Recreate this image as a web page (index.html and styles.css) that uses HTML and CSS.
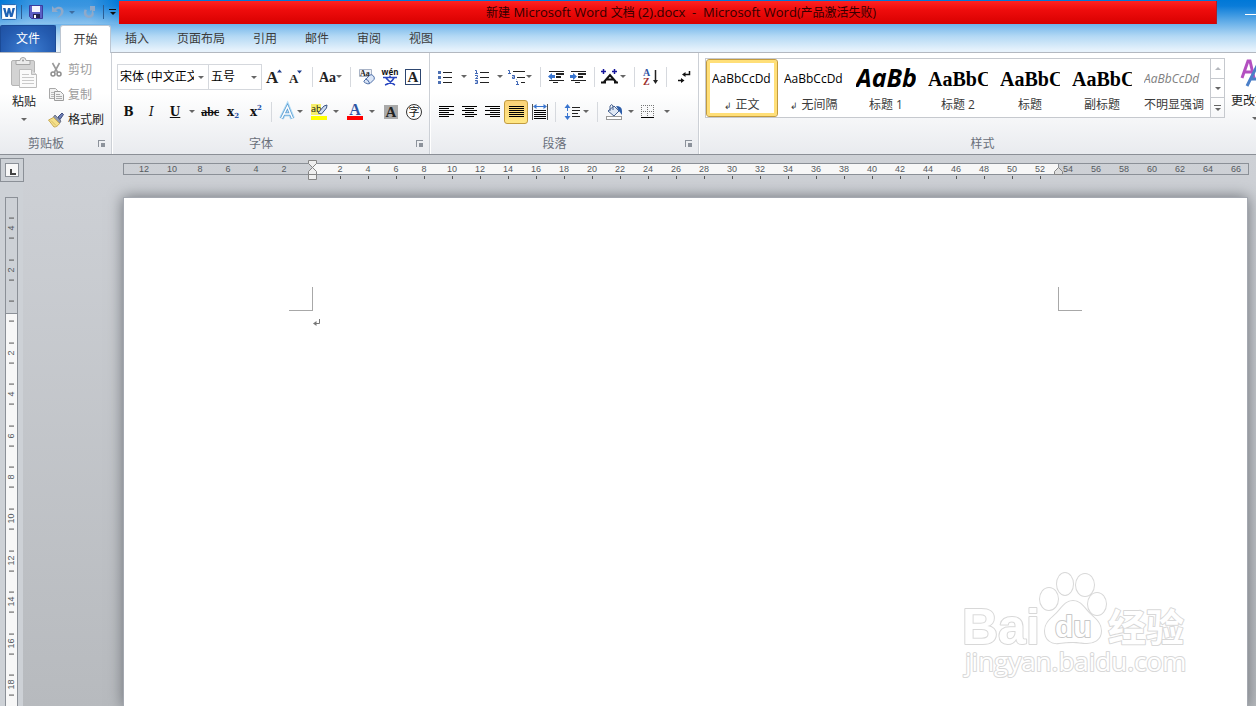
FILE: index.html
```html
<!DOCTYPE html>
<html lang="zh-CN">
<head>
    <meta charset="UTF-8">
    <meta name="viewport" content="width=device-width, initial-scale=1.0">
    <title>新建 Microsoft Word 文档 (2).docx - Microsoft Word</title>
    <link rel="stylesheet" href="styles.css">
</head>
<body>

<header class="window-top">
    <div class="title-bar">
        <div class="quick-access">
            <svg class="word-logo" width="16" height="16" viewBox="0 0 16 16">
                <rect x="0.5" y="0.5" width="15" height="15" rx="1" fill="#e9f2fb" stroke="#2a6cb5"/>
                <rect x="2" y="2" width="12" height="12" fill="#fff"/>
                <path d="M2 4h2.500l1.200 5.500L7 4h2l1.300 5.500L11.500 4H14l-2.500 9H9L8 8.500 7 13H4.500z" fill="#1e62b4"/>
            </svg>
            <span class="qa-line"></span>
            <button class="qa-btn" aria-label="保存">
                <svg width="14" height="14" viewBox="0 0 14 14">
                    <path d="M0.500 0.500h13v13h-11l-2-2z" fill="#5b5fc4" stroke="#3a3c9c"/>
                    <rect x="3" y="1" width="8" height="6" fill="#f3f5fd"/>
                    <rect x="4" y="9" width="7" height="4" fill="#23244f"/>
                    <rect x="5" y="10" width="2" height="3" fill="#fff"/>
                </svg>
            </button>
            <button class="qa-btn qa-undo" aria-label="撤消">
                <svg width="13" height="14" viewBox="0 0 13 14">
                    <path d="M1 1v6h6L5 5c3-2 5-1 5 1.500S8 11 6 13c4-1 7-4 6.500-7.500C12 1.500 7 0.500 3.500 3.500z" fill="#8fa9c9"/>
                </svg>
            </button>
            <span class="arrow arrow-blue"></span>
            <button class="qa-btn qa-redo" aria-label="重复">
                <svg width="13" height="14" viewBox="0 0 13 14">
                    <path d="M7 1h5v5h-2c2 4 0 7-4 7S-0.500 9 1.500 4.500L4 5C2.500 8 4 10.500 6 10.500S9.500 8 8.500 5L7 6z" fill="#8fa9c9"/>
                </svg>
            </button>
            <span class="qa-line"></span>
            <button class="qa-more" aria-label="自定义快速访问工具栏"><span class="arrow"></span></button>
        </div>
        <div class="title-text"><span>新建</span> Microsoft Word <span>文档</span> (2).docx&nbsp; -&nbsp; Microsoft Word<span>(产品激活失败)</span></div>
        <button class="minimize" aria-label="最小化"></button>
    </div>
    <nav class="tabs">
        <button class="tab tab-file">文件</button>
        <button class="tab tab-active">开始</button>
        <button class="tab">插入</button>
        <button class="tab">页面布局</button>
        <button class="tab">引用</button>
        <button class="tab">邮件</button>
        <button class="tab">审阅</button>
        <button class="tab">视图</button>
    </nav>
</header>

<section class="ribbon">

    <!-- clipboard -->
    <div class="group group-clipboard">
        <div class="group-body clipboard">
            <button class="big-btn">
                <svg width="28" height="32" viewBox="0 0 28 32">
                    <rect x="1.500" y="3.500" width="23" height="25" rx="1.500" fill="#d3d3d3" stroke="#b5b5b5"/>
                    <path d="M6 3.500h4a3 3 0 0 1 6 0h4v4H6z" fill="#ececec" stroke="#a5a5a5"/>
                    <circle cx="13" cy="3.500" r="1" fill="#999"/>
                    <path d="M9.500 12.500h12l5 5v13h-17z" fill="#fafafa" stroke="#bcbcbc"/>
                    <path d="M21.500 12.500v5h5" fill="#ddd" stroke="#bcbcbc"/>
                    <path d="M12 17.500h7M12 20.500h12M12 23.500h12M12 26.500h12" stroke="#c9c9c9"/>
                </svg>
                <span>粘贴</span>
                <span class="arrow"></span>
            </button>
            <div class="clip-list">
                <button class="clip-btn" disabled>
                    <svg width="16" height="16" viewBox="0 0 16 16">
                        <path d="M4.500 1l5 9M11.500 1l-5 9" stroke="#9a9a9a" stroke-width="1.600" fill="none"/>
                        <circle cx="5" cy="12" r="2" fill="none" stroke="#8d8d8d" stroke-width="1.500"/>
                        <circle cx="11" cy="12" r="2" fill="none" stroke="#8d8d8d" stroke-width="1.500"/>
                    </svg>剪切
                </button>
                <button class="clip-btn" disabled>
                    <svg width="16" height="16" viewBox="0 0 16 16">
                        <path d="M1.500 1.500h6l2 2v8h-8z" fill="#f2f2f2" stroke="#a8a8a8"/>
                        <path d="M3 5.500h4M3 7.500h3M3 9.500h3" stroke="#b9b9b9"/>
                        <path d="M6.500 4.500h6l3 3v6h-9z" fill="#f2f2f2" stroke="#9c9c9c"/>
                        <path d="M8 7.500h4M8 9.500h6M8 11.500h6" stroke="#aaa"/>
                    </svg>复制
                </button>
                <button class="clip-btn">
                    <svg width="16" height="16" viewBox="0 0 16 16">
                        <path d="M10 5l4-4 1.500 1.500-3.500 5z" fill="#6d7fb5" stroke="#3e4d80"/>
                        <path d="M7 3l6 6-1.500 2.500L5 5.500z" fill="#8f98ab" stroke="#4d566e" stroke-width="0.700"/>
                        <path d="M5.500 5.500l6 6C10 14 8 15 6 15L0.500 8z" fill="#f5e08a" stroke="#c9ab55"/>
                        <path d="M3 8.500l5 5" stroke="#d8bd62"/>
                    </svg>格式刷
                </button>
            </div>
        </div>
        <div class="group-label">剪贴板<i class="launcher"></i></div>
    </div>

    <!-- font -->
    <div class="group group-font">
        <div class="group-body">
            <div class="row">
                <label class="combo combo-font"><select aria-label="字体"><option>宋体 (中文正文)</option></select></label>
                <label class="combo combo-size"><select aria-label="字号"><option>五号</option></select></label>
                <button class="btn" aria-label="增大字体">
                    <svg width="16" height="16" viewBox="0 0 16 16">
                        <text class="serif" x="0" y="14" font-size="17">A</text>
                        <path d="M11 3.500h5L13.500 0.500z" fill="#1f3f8f"/>
                    </svg>
                </button>
                <button class="btn" aria-label="缩小字体">
                    <svg width="16" height="16" viewBox="0 0 16 16">
                        <text class="serif" x="0" y="14" font-size="13">A</text>
                        <path d="M8 1.500h5l-2.500 3z" fill="#1f3f8f"/>
                    </svg>
                </button>
                <span class="sep"></span>
                <button class="btn btn-menu" aria-label="更改大小写">
                    <svg width="18" height="16" viewBox="0 0 18 16">
                        <text class="serif" x="1" y="13" font-size="14">Aa</text>
                    </svg>
                    <span class="arrow"></span>
                </button>
                <span class="sep"></span>
                <button class="btn" aria-label="清除格式">
                    <svg width="18" height="18" viewBox="0 0 18 18">
                        <path d="M1.500 1.500h12v7h-12z" fill="#eef1f7" stroke="#a9b4c7"/>
                        <text x="2" y="8" font-size="8" class="serif">Aa</text>
                        <path d="M6 13l6-6q2-1 3.500 1t0.500 3.500l-4 4q-2 1-4.500-0.500T6 13z" fill="#dbe6f7" stroke="#4e6fa8"/>
                        <path d="M7 11q3 0 4.500 4" fill="none" stroke="#4e6fa8"/>
                    </svg>
                </button>
                <button class="btn" aria-label="拼音指南">
                    <svg width="18" height="18" viewBox="0 0 18 18">
                        <text x="9" y="7" font-size="8" text-anchor="middle" class="pinyin">wén</text>
                        <path d="M2 9.500h14M9 7.500v2M5 10q3 4 9 7M13 10q-3 5-9 7" fill="none" stroke="#2846c0" stroke-width="1.500"/>
                    </svg>
                </button>
                <button class="btn" aria-label="字符边框">
                    <svg width="16" height="16" viewBox="0 0 16 16">
                        <rect x="0.500" y="0.500" width="15" height="15" fill="#fff" stroke="#2d4670"/>
                        <text class="serif" x="8" y="13" font-size="15" text-anchor="middle">A</text>
                    </svg>
                </button>
            </div>
            <div class="row">
                <button class="btn letter">B</button>
                <button class="btn letter letter-i">I</button>
                <button class="btn btn-split letter" aria-label="下划线"><span class="letter-u">U</span><span class="arrow"></span></button>
                <button class="btn letter letter-s">abc</button>
                <button class="btn letter">x<span class="low">2</span></button>
                <button class="btn letter">x<span class="high">2</span></button>
                <span class="sep"></span>
                <button class="btn btn-menu" aria-label="文本效果">
                    <svg width="20" height="18" viewBox="0 0 20 18">
                        <path d="M4.500 15.500L10.500 3.500l5 12M7 11h7" fill="none" stroke="#b3ddf6" stroke-width="5"/>
                        <path d="M4.500 15.500L10.500 3.500l5 12M7 11h7" fill="none" stroke="#5b9bd0" stroke-width="3"/>
                        <path d="M4.500 15.500L10.500 3.500l5 12M7 11h7" fill="none" stroke="#fff" stroke-width="1.500"/>
                    </svg>
                    <span class="arrow"></span>
                </button>
                <button class="btn btn-split" aria-label="突出显示">
                    <svg width="18" height="18" viewBox="0 0 18 18">
                        <rect x="1" y="1" width="10" height="11" fill="#f5ee6c"/>
                        <text x="1" y="9" font-size="9" class="sans">ab</text>
                        <path d="M8 10l6-7 3-1-0.500 3-5 6z" fill="#cfdcf1" stroke="#3d5787"/>
                        <rect x="1" y="13" width="16" height="4" fill="#ff0"/>
                    </svg>
                    <span class="arrow"></span>
                </button>
                <button class="btn btn-split" aria-label="字体颜色">
                    <svg width="18" height="18" viewBox="0 0 18 18">
                        <text class="serif blue" x="9" y="12" font-size="16" text-anchor="middle">A</text>
                        <rect x="1" y="13" width="16" height="4" fill="#f00"/>
                    </svg>
                    <span class="arrow"></span>
                </button>
                <button class="btn" aria-label="字符底纹">
                    <svg width="14" height="14" viewBox="0 0 14 14">
                        <rect width="14" height="14" fill="#aaa"/>
                        <text class="serif" x="7" y="12" font-size="15" text-anchor="middle">A</text>
                    </svg>
                </button>
                <button class="btn" aria-label="带圈字符">
                    <svg width="18" height="18" viewBox="0 0 18 18">
                        <circle cx="9" cy="9" r="7.500" fill="#fff" stroke="#333"/>
                        <text class="sans" x="9" y="13" font-size="11" text-anchor="middle">字</text>
                    </svg>
                </button>
            </div>
        </div>
        <div class="group-label">字体<i class="launcher"></i></div>
    </div>

    <!-- paragraph -->
    <div class="group group-paragraph">
        <div class="group-body">
            <div class="row">
                <button class="btn btn-split" aria-label="项目符号">
                    <svg width="15" height="16" viewBox="0 0 15 16">
                        <path d="M5 3.500h9M5 8.500h9M5 13.500h9" stroke="#222"/>
                        <path d="M0 2h3v3H0zM0 7h3v3H0zM0 12h3v3H0z" fill="#4d70b3"/>
                    </svg>
                    <span class="arrow"></span>
                </button>
                <button class="btn btn-split" aria-label="编号">
                    <svg width="15" height="16" viewBox="0 0 15 16">
                        <path d="M6 3.500h9M6 8.500h9M6 13.500h9" stroke="#222"/>
                        <path d="M1 1.500h1.500v3M1 4.500h3M1 6.500h2.500v1.500L1.500 9.500H4M1 11.500h2.500v3H1M1.500 13H3" fill="none" stroke="#3f66b5"/>
                    </svg>
                    <span class="arrow"></span>
                </button>
                <button class="btn btn-menu" aria-label="多级列表">
                    <svg width="18" height="16" viewBox="0 0 18 16">
                        <path d="M5 2.500h12M9 8.500h8M13 13.500h4" stroke="#222"/>
                        <path d="M0 1.500h1.500v3M0 4.500h3M4 6.500h2.500v3H4.500V8H6M8.500 10v0.500M8 12.500h1.500v3M8 15.500h3" fill="none" stroke="#3f66b5"/>
                    </svg>
                    <span class="arrow"></span>
                </button>
                <span class="sep"></span>
                <button class="btn" aria-label="减少缩进量">
                    <svg width="17" height="16" viewBox="0 0 17 16">
                        <path d="M1 2.500h15M8 5.500h8M8 8.500h5M1 11.500h15M5 13.500h5" stroke="#222"/>
                        <path d="M8 4.500h8M8 7.500h5" stroke="#222"/>
                        <path d="M0 7.500l4-3.500v2h3v3H4v2z" fill="#3874cf"/>
                    </svg>
                </button>
                <button class="btn" aria-label="增加缩进量">
                    <svg width="17" height="16" viewBox="0 0 17 16">
                        <path d="M1 2.500h15M8 5.500h8M8 8.500h5M1 11.500h15M5 13.500h5" stroke="#222"/>
                        <path d="M8 4.500h8M8 7.500h5" stroke="#222"/>
                        <path d="M7 7.500L3 4v2H0v3h3v2z" fill="#3874cf"/>
                    </svg>
                </button>
                <span class="sep"></span>
                <button class="btn btn-menu" aria-label="中文版式">
                    <svg width="20" height="16" viewBox="0 0 20 16">
                        <path d="M4 13l6-7 6 7M7 10.500h6M1 13.500h5M14 13.500h4" fill="none" stroke="#111" stroke-width="2"/>
                        <path d="M1 2.500h5M3.500 0v5M12 2.500h5M14.500 0v5" stroke="#15159a" stroke-width="1.500"/>
                    </svg>
                    <span class="arrow"></span>
                </button>
                <span class="sep"></span>
                <button class="btn" aria-label="排序">
                    <svg width="16" height="18" viewBox="0 0 16 18">
                        <text x="0" y="8" font-size="10" class="serif blue">A</text>
                        <text x="0" y="17" font-size="10" class="serif red">Z</text>
                        <path d="M12.500 2v11" stroke="#222" stroke-width="1.500"/>
                        <path d="M10 12h5l-2.500 4z" fill="#222"/>
                    </svg>
                </button>
                <span class="sep"></span>
                <button class="btn" aria-label="显示编辑标记">
                    <svg width="16" height="16" viewBox="0 0 16 16">
                        <path d="M14.500 2v3.500H9M3 11.500h4" fill="none" stroke="#111" stroke-width="1.500"/>
                        <path d="M7 5.500L10.500 3v5zM6 9v5l3.500-2.500z" fill="#111"/>
                    </svg>
                </button>
            </div>
            <div class="row">
                <button class="btn" aria-label="文本左对齐">
                    <svg width="15" height="14" viewBox="0 0 15 14"><path d="M0 1.500h15M0 3.500h10M0 5.500h15M0 7.500h10M0 9.500h15M0 11.500h10" stroke="#000"/></svg>
                </button>
                <button class="btn" aria-label="居中">
                    <svg width="15" height="14" viewBox="0 0 15 14"><path d="M0 1.500h15M3 3.500h9M0 5.500h15M3 7.500h9M0 9.500h15M3 11.500h9" stroke="#000"/></svg>
                </button>
                <button class="btn" aria-label="文本右对齐">
                    <svg width="15" height="14" viewBox="0 0 15 14"><path d="M0 1.500h15M5 3.500h10M0 5.500h15M5 7.500h10M0 9.500h15M5 11.500h10" stroke="#000"/></svg>
                </button>
                <button class="btn btn-on" aria-label="两端对齐">
                    <svg width="15" height="14" viewBox="0 0 15 14"><path d="M0 1.500h15M0 3.500h15M0 5.500h15M0 7.500h15M0 9.500h15M0 11.500h15" stroke="#000"/></svg>
                </button>
                <button class="btn" aria-label="分散对齐">
                    <svg width="16" height="16" viewBox="0 0 16 16">
                        <path d="M0.500 0v16M15.500 0v16" stroke="#555"/>
                        <path d="M3 2.500h10" stroke="#3874cf"/>
                        <path d="M1 2.500L4.500 0v5zM15 2.500L11.500 0v5z" fill="#3874cf"/>
                        <path d="M2 6.500h12M2 8.500h12M2 10.500h12M2 12.500h12M2 14.500h12" stroke="#000"/>
                    </svg>
                </button>
                <span class="sep"></span>
                <button class="btn btn-menu" aria-label="行和段落间距">
                    <svg width="22" height="16" viewBox="0 0 22 16">
                        <path d="M11 3.500h8M11 6.500h8M11 9.500h6M11 12.500h8" stroke="#222"/>
                        <path d="M6.500 2v12" stroke="#3874cf" stroke-dasharray="5 2"/>
                        <path d="M6.500 0L9.500 4h-6zM6.500 16l3-4h-6z" fill="#3874cf"/>
                    </svg>
                    <span class="arrow"></span>
                </button>
                <span class="sep"></span>
                <button class="btn btn-split" aria-label="底纹">
                    <svg width="18" height="18" viewBox="0 0 18 18">
                        <path d="M3 8l6-5 5 5-5 5z" fill="#dfe8f5" stroke="#46618f"/>
                        <path d="M5 8V3q2-3 3 0v4" fill="none" stroke="#46618f"/>
                        <path d="M11 3q6 0 6 5v4l-3-4z" fill="#2c5ca8"/>
                        <rect x="1.500" y="13.500" width="15" height="3" fill="#fff" stroke="#999"/>
                    </svg>
                    <span class="arrow"></span>
                </button>
                <button class="btn btn-split" aria-label="边框">
                    <svg width="14" height="14" viewBox="0 0 14 14">
                        <path d="M0 0.500h13M0.500 0v12M12.500 0v12M6.500 0v12M0 6.500h13" stroke="#777" stroke-dasharray="1 1" fill="none"/>
                        <path d="M0 12.500h13" stroke="#000"/>
                    </svg>
                    <span class="arrow"></span>
                </button>
            </div>
        </div>
        <div class="group-label">段落<i class="launcher"></i></div>
    </div>

    <!-- styles -->
    <div class="group group-styles">
        <div class="group-body styles-body">
            <div class="gallery">
                <button class="style style-on"><span class="preview">AaBbCcDd</span><span class="style-name"><small>↲</small> 正文</span></button>
                <button class="style"><span class="preview">AaBbCcDd</span><span class="style-name"><small>↲</small> 无间隔</span></button>
                <button class="style"><span class="preview preview-h1">AaBb</span><span class="style-name">标题 1</span></button>
                <button class="style"><span class="preview preview-h2">AaBbC</span><span class="style-name">标题 2</span></button>
                <button class="style"><span class="preview preview-h2">AaBbC</span><span class="style-name">标题</span></button>
                <button class="style"><span class="preview preview-h2">AaBbC</span><span class="style-name">副标题</span></button>
                <button class="style"><span class="preview preview-em">AaBbCcDd</span><span class="style-name">不明显强调</span></button>
            </div>
            <div class="scroller">
                <button aria-label="上一行" disabled><span class="arrow arrow-up"></span></button>
                <button aria-label="下一行"><span class="arrow"></span></button>
                <button aria-label="其他"><span class="arrow"></span></button>
            </div>
            <button class="big-btn change-styles">
                <svg width="32" height="32" viewBox="0 0 32 32">
                    <path d="M3 20L9 3h2l4 17M5 14h9" fill="none" stroke="#b34fc0" stroke-width="3"/>
                    <path d="M8 28L18 8h2l5 20M12 21h11" fill="none" stroke="#4a7fc8" stroke-width="3"/>
                </svg>
                <span>更改样式</span>
                <span class="arrow"></span>
            </button>
        </div>
        <div class="group-label">样式</div>
    </div>
</section>

<main class="workspace">
    <div class="side">
        <button class="tab-stop" aria-label="左对齐式制表符"><span></span></button>
        <div class="ruler-v">
            <span>4</span><span>2</span><span></span><span>2</span><span>4</span><span>6</span>
            <span>8</span><span>10</span><span>12</span><span>14</span><span>16</span><span>18</span>
        </div>
    </div>
    <div class="canvas">
        <div class="ruler-h">
            <span>12</span><span>10</span><span>8</span><span>6</span><span>4</span><span>2</span><span></span>
            <span>2</span><span>4</span><span>6</span><span>8</span><span>10</span><span>12</span><span>14</span>
            <span>16</span><span>18</span><span>20</span><span>22</span><span>24</span><span>26</span><span>28</span>
            <span>30</span><span>32</span><span>34</span><span>36</span><span>38</span><span>40</span><span>42</span>
            <span>44</span><span>46</span><span>48</span><span>50</span><span>52</span><span>54</span><span>56</span>
            <span>58</span><span>60</span><span>62</span><span>64</span><span>66</span>
            <svg class="indent indent-left" width="11" height="22" viewBox="0 0 11 22">
                <path d="M1.500 0.500h8v3l-4 4-4-4zM5.500 7.500l4 4v3h-8v-3zM1.500 14.500h8v5h-8z" fill="#efefef" stroke="#858585"/>
            </svg>
            <svg class="indent indent-right" width="11" height="22" viewBox="0 0 11 22">
                <path d="M5.500 7.500l4 4v3h-8v-3z" fill="#dedede" stroke="#858585"/>
            </svg>
        </div>
        <div class="ruler-ticks"></div>
        <article class="page">
            <div class="crop-marks"><i class="crop crop-left"></i><i class="crop crop-right"></i></div>
            <p class="paragraph">
                <svg width="9" height="8" viewBox="0 0 9 8">
                    <path d="M6.500 0v4.500H2" fill="none" stroke="#777"/>
                    <path d="M0 4.500L3.500 2v5z" fill="#777"/>
                </svg>
            </p>
        </article>
    </div>

    <svg class="watermark" width="232" height="120" viewBox="0 0 232 120">
        <g class="mark">
            <text x="2" y="74" font-size="50" class="logo">Bai</text>
            <ellipse cx="89" cy="29" rx="9" ry="11"/>
            <ellipse cx="105" cy="14" rx="8" ry="11"/>
            <ellipse cx="125" cy="15" rx="9" ry="11"/>
            <ellipse cx="137" cy="34" rx="9" ry="11"/>
            <path d="M113 31c-8 0-11 7-16 12s-12 9-12 18 7 13 14 12 9-1 14-1 8 1 14 1 14-3 14-12-7-13-12-18-8-12-16-12z"/>
            <text x="95" y="67" font-size="30" class="logo logo-du">du</text>
            <text x="148" y="71" font-size="38" class="logo-cn">经验</text>
            <text x="5" y="101" font-size="26" class="url">jingyan.baidu.com</text>
        </g>
    </svg>
</main>

</body>
</html>
```

FILE: styles.css
```css
* {
    box-sizing: border-box;
}
:root {
    --font-ui: "Open Sans", "Noto Sans CJK SC", sans-serif;
    --line: #8b9097;
    --arrow: #666;
}
body {
    margin: 0;
    height: 100vh;
    display: flex;
    flex-direction: column;
    overflow: hidden;
    font-family: var(--font-ui);
    font-size: 12px;
    line-height: 16px;
    color: #3b3b3b;
}
button {
    padding: 0;
    border: 0;
    background: none;
    font: inherit;
    color: inherit;
}
svg {
    flex: none;
    overflow: visible;
}

/* title bar and tabs */
.window-top {
    flex: none;
    background: linear-gradient(#0078d7 0, #0a7cd9 6px, #6fb4ea 24px, #b2d8f4 36px, #e6f2fc 50px);
    border-bottom: 1px solid #b3b8c0;
}
.title-bar {
    display: flex;
    height: 24px;
}
.quick-access {
    width: 119px;
    display: flex;
    align-items: center;
    padding-left: 1px;
    background: linear-gradient(90deg, transparent, rgba(255, 255, 255, 0.2) 30px, rgba(255, 255, 255, 0.2) 90px, transparent);
}
.qa-line {
    width: 1px;
    height: 14px;
    margin: 0 7px 0 4px;
    background: #2b5d94;
}
.qa-btn {
    display: flex;
    margin-right: 8px;
}
.qa-undo {
    margin-right: 5px;
}
.qa-redo {
    margin: 0 3px 0 8px;
}
.qa-more {
    display: flex;
    flex-direction: column;
    align-items: center;
    gap: 2px;
    margin-left: -2px;
}
.qa-more::before {
    content: "";
    width: 7px;
    height: 1px;
    background: #111;
}
.qa-more .arrow {
    border-top-color: #111;
}
.title-text {
    flex: 1;
    margin-top: 1px;
    padding-left: 27px;
    font-size: 13px;
    line-height: 23px;
    text-align: center;
    color: #300;
    background: linear-gradient(#ff2222, #ee0c0c 40%, #d80000);
    border-right: 1px solid #a8222c;
}
.title-text span {
    font-size: 12px;
}
.minimize {
    width: 39px;
    background: linear-gradient(#fff, #fff) right 14px / 11px 1px no-repeat;
}
.tabs {
    display: flex;
    height: 28px;
    padding-top: 1px;
}
.tab {
    padding: 0 14px;
    height: 27px;
}
.tab-file {
    width: 56px;
    margin-right: 4px;
    color: #fff;
    border: 1px solid #1b4a96;
    border-bottom: 0;
    border-radius: 2px 2px 0 0;
    background: radial-gradient(ellipse at 50% 100%, #3f80d4, #245bb0 70%, #1f51a2);
}
.tab-active {
    width: 51px;
    padding: 0;
    background: #fff;
    border: 1px solid #bcc6d2;
    border-bottom: 0;
    border-radius: 3px 3px 0 0;
    height: 28px;
}

/* ribbon */
.ribbon {
    flex: none;
    display: flex;
    height: 102px;
    background: linear-gradient(#fff 0, #fff 40px, #e9ebef 100px);
    border-bottom: 1px solid #8b8f96;
    overflow: hidden;
}
.group {
    flex: none;
    display: flex;
    flex-direction: column;
    border-right: 1px solid #ccd0d6;
    box-shadow: 1px 0 #fff;
}
.group-clipboard {
    width: 112px;
}
.group-font {
    width: 318px;
}
.group-paragraph {
    width: 269px;
}
.group-styles {
    width: 568px;
}
.group-body {
    height: 82px;
    padding: 6px 4px 0 5px;
}
.group-label {
    display: flex;
    align-items: center;
    justify-content: center;
    position: relative;
    height: 18px;
    padding-right: 19px;
    color: #696f7a;
}
.group-styles .group-label {
    padding-right: 0;
}
.launcher {
    position: absolute;
    right: 6px;
    top: 5px;
    width: 7px;
    height: 7px;
    border-left: 1px solid #8c929b;
    border-top: 1px solid #8c929b;
    background: linear-gradient(#8c929b, #8c929b) right bottom / 4px 4px no-repeat;
}
.row {
    display: flex;
    align-items: center;
    height: 35px;
}
.btn {
    display: flex;
    align-items: center;
    justify-content: center;
    width: 23px;
    height: 24px;
}
.btn-split {
    width: 36px;
    justify-content: space-between;
    padding: 0 4px 0 3px;
}
.btn-menu {
    width: auto;
    padding: 0 4px 0 1px;
}
.btn-on {
    width: 24px;
    border: 1px solid #c29b3f;
    border-radius: 3px;
    background: linear-gradient(#fbd277, #ffe784);
}
.sep {
    width: 1px;
    height: 20px;
    margin: 0 4px;
    background: #d6d9de;
}
.arrow {
    flex: none;
    width: 6px;
    height: 3px;
    border: 3px solid transparent;
    border-top-color: var(--arrow);
    border-bottom: 0;
}
.arrow-blue {
    border-top-color: #3d6c9f;
}
.arrow-up {
    border-top: 0;
    border-bottom: 3px solid #b5b8bd;
}
.letter {
    font: bold 12px/16px "DejaVu Serif", serif;
    color: #111;
}
.letter-i {
    font-style: italic;
    font-weight: normal;
}
.letter-u {
    padding-left: 4px;
    text-decoration: underline;
}
.letter-s {
    font: bold 12px/16px "Liberation Serif", serif;
    text-decoration: line-through;
}
.low, .high {
    font-size: 7px;
    color: #2850a8;
}
.low {
    padding-top: 8px;
}
.high {
    padding-bottom: 8px;
}
.serif {
    font-family: "Liberation Serif", serif;
    font-weight: bold;
    fill: #222;
}
.sans, .pinyin {
    font-family: var(--font-ui);
    fill: #111;
}
.pinyin {
    font-weight: bold;
}
.blue {
    fill: #2f55a4;
}
.red {
    fill: #9c2f2f;
}

.combo {
    position: relative;
    height: 26px;
    border: 1px solid #d5d8dd;
    background: #fff;
}
.combo::after {
    content: "";
    position: absolute;
    right: 4px;
    top: 11px;
    border: 3px solid transparent;
    border-top-color: var(--arrow);
    border-bottom: 0;
}
.combo select {
    appearance: none;
    width: 100%;
    height: 24px;
    padding: 0 14px 0 2px;
    border: 0;
    background: none;
    font: inherit;
    color: #000;
    text-overflow: clip;
}
.combo-font {
    width: 92px;
}
.combo-size {
    width: 54px;
    margin-left: -1px;
}

.clipboard {
    display: flex;
    padding: 4px 0 0 4px;
}
.big-btn {
    display: flex;
    flex-direction: column;
    align-items: center;
    width: 40px;
    color: #222;
}
.big-btn svg {
    margin-bottom: 5px;
}
.big-btn .arrow {
    margin-top: 8px;
}
.clip-list {
    margin-left: 4px;
}
.clip-btn {
    display: flex;
    align-items: center;
    gap: 4px;
    height: 25px;
    color: #222;
}
.clip-btn:disabled {
    color: #9c9c9c;
}

/* style gallery */
.styles-body {
    display: flex;
    padding: 5px 0 0 6px;
}
.gallery {
    flex: none;
    display: flex;
    height: 60px;
    border: 1px solid #c6c9ce;
    background: #fff;
}
.style {
    display: flex;
    flex-direction: column;
    width: 72px;
    height: 58px;
    padding: 6px;
}
.style-on {
    padding: 5px;
    border: 1px solid #c29b3f;
    border-radius: 3px;
    box-shadow: inset 0 0 0 3px #ffdf78;
}
.preview {
    flex: none;
    height: 28px;
    width: 60px;
    line-height: 28px;
    overflow: hidden;
    white-space: nowrap;
    text-align: left;
    color: #000;
}
.preview-h1 {
    font-size: 25px;
    font-weight: bold;
    font-style: italic;
    line-height: 24px;
}
.preview-h2 {
    font-family: "Liberation Serif", serif;
    font-size: 20px;
    font-weight: bold;
}
.preview-em {
    font-style: italic;
    color: #808080;
}
.style-name {
    margin-top: 2px;
    line-height: 20px;
    width: 60px;
    text-align: center;
    white-space: nowrap;
}
.style-name small {
    font-size: 9px;
}
.scroller {
    flex: none;
    display: flex;
    flex-direction: column;
    width: 14px;
    height: 60px;
}
.scroller button {
    flex: 1;
    display: flex;
    flex-direction: column;
    align-items: center;
    justify-content: center;
    gap: 2px;
    border: 1px solid #c6c9ce;
    border-width: 0 1px 1px 0;
}
.scroller button:first-child {
    border-top-width: 1px;
}
.scroller button:last-child::before {
    content: "";
    width: 7px;
    height: 1px;
    background: var(--arrow);
}
.change-styles {
    flex: none;
    width: 48px;
    margin-left: 6px;
    white-space: nowrap;
}
.change-styles svg {
    margin-bottom: 3px;
}

/* rulers and page */
.workspace {
    flex: 1;
    min-height: 0;
    display: flex;
    position: relative;
    overflow: hidden;
    background: linear-gradient(#ced1d6, #b7babe);
    color: #555a60;
}
.side {
    width: 23px;
    display: flex;
    flex-direction: column;
    align-items: center;
    background: #cdd1d6;
}
.tab-stop {
    display: flex;
    width: 24px;
    height: 24px;
    margin: 3px 0 15px;
    border: 1px solid var(--line);
    padding: 4px;
}
.tab-stop span {
    width: 14px;
    height: 14px;
    border: 1px solid var(--line);
    background:
        linear-gradient(#444, #444) 4px 5px / 2px 6px no-repeat,
        linear-gradient(#444, #444) 4px 9px / 6px 2px no-repeat,
        #f8f8f8;
}
.ruler-v {
    flex: 1;
    display: flex;
    flex-direction: column;
    width: 13px;
    padding-top: 9px;
    border: 1px solid var(--line);
    border-bottom: 0;
    background: linear-gradient(#cdd1d6 115px, var(--line) 115px, var(--line) 116px, #f7f7f7 116px);
}
.ruler-v span {
    flex: 1;
    display: flex;
    align-items: center;
    justify-content: center;
    writing-mode: vertical-rl;
    transform: rotate(180deg);
    font: 9px/11px "Liberation Sans", sans-serif;
    background:
        linear-gradient(#555, #555) center 25% / 5px 1px no-repeat,
        linear-gradient(#555, #555) center 75% / 5px 1px no-repeat;
}
.canvas {
    flex: 1;
    min-width: 0;
    display: flex;
    flex-direction: column;
    padding: 8px 7px 0 100px;
}
.ruler-h {
    flex: none;
    display: flex;
    position: relative;
    height: 12px;
    padding-left: 6px;
    border: 1px solid var(--line);
    background: linear-gradient(90deg, transparent 188px, #f7f7f7 188px, #f7f7f7 934px, var(--line) 934px, var(--line) 935px, transparent 935px);
}
.ruler-h span {
    flex: none;
    width: 28px;
    text-align: center;
    font: 9px/10px "Liberation Sans", sans-serif;
}
.ruler-ticks {
    flex: none;
    width: 732px;
    height: 3px;
    margin: 1px 0 19px 203px;
    background: repeating-linear-gradient(90deg, transparent 0, transparent 14px, #555 14px, #555 15px, transparent 15px, transparent 28px);
}
.indent {
    position: absolute;
    top: -4px;
}
.indent-left {
    left: 183px;
}
.indent-right {
    left: 929px;
}
.page {
    flex: 1;
    margin: 0 2px 0 1px;
    padding: 89px 165px 0;
    background: #fff;
    box-shadow: 0 0 0 1px #a4a8b0, 0 0 14px 1px #6c7076;
}
.crop-marks {
    display: flex;
    justify-content: space-between;
}
.crop {
    width: 24px;
    height: 24px;
    border-bottom: 1px solid #a8a8a8;
}
.crop-left {
    border-right: 1px solid #a8a8a8;
}
.crop-right {
    border-left: 1px solid #a8a8a8;
}
.paragraph {
    display: flex;
    margin: 8px 24px 0;
}

/* site mark over the page */
.watermark {
    position: absolute;
    right: 64px;
    bottom: 16px;
}
.mark {
    fill: #fff;
    stroke: #d8d8d8;
    stroke-width: 2;
    stroke-linejoin: round;
    paint-order: stroke;
}
.logo {
    font-family: "Liberation Sans", sans-serif;
    font-weight: bold;
}
.logo-du {
    stroke: #c8c8c8;
}
.logo-cn {
    font-family: "Noto Sans CJK SC", sans-serif;
    font-weight: bold;
}
.url {
    font-family: "Open Sans", sans-serif;
}
```
